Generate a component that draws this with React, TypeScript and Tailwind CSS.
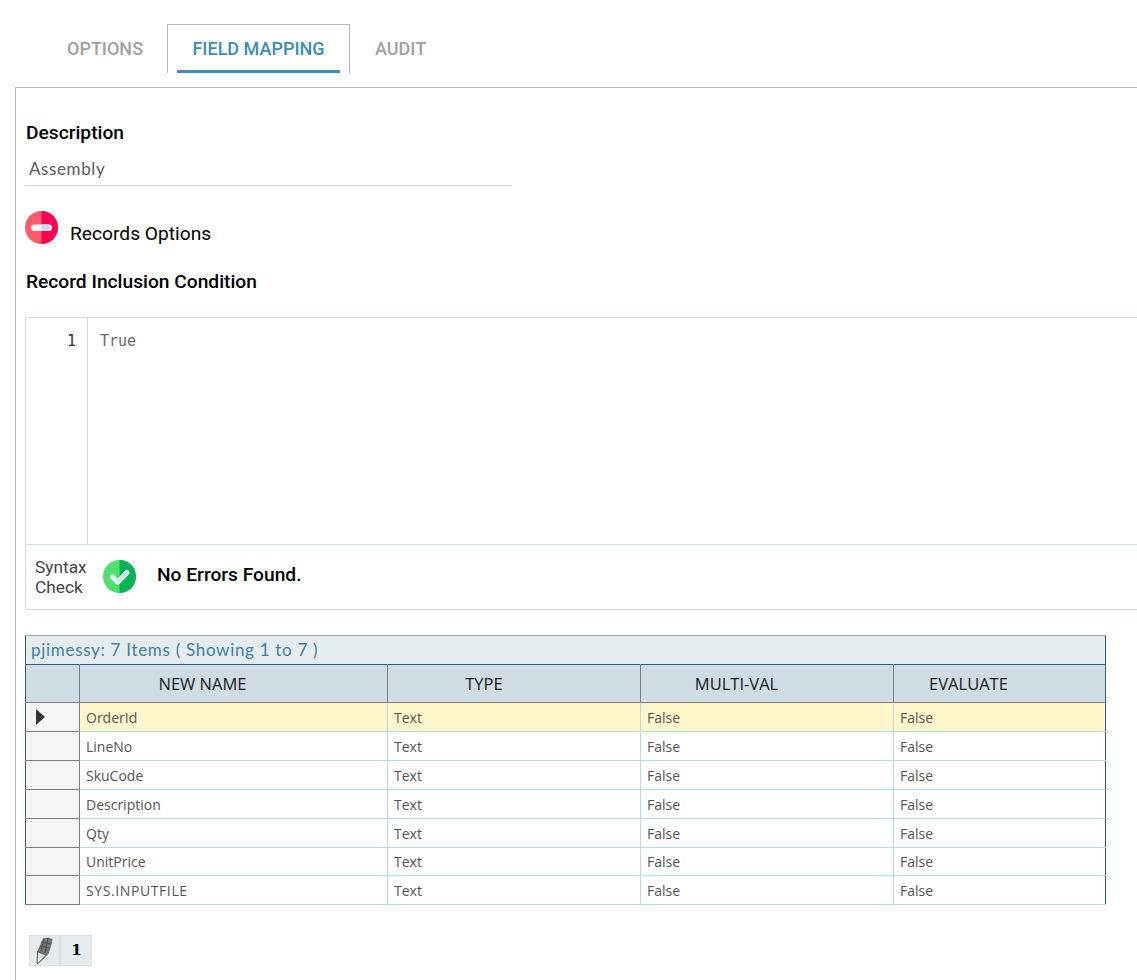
import React from "react";

const rows = ["OrderId", "LineNo", "SkuCode", "Description", "Qty", "UnitPrice", "SYS.INPUTFILE"];

function MinusIcon() {
  return (
    <svg width="33" height="33" viewBox="0 0 33 33" className="shrink-0">
      <circle cx="16.5" cy="16.5" r="16.5" fill="#ff5a6a" />
      <path d="M16.5 0a16.5 16.5 0 0 1 0 33z" fill="#fd0054" />
      <rect x="6" y="13.5" width="21" height="6.5" rx="3.2" fill="#f0f4f6" />
      <path d="M16.5 13.5H23.8a3.2 3.2 0 0 1 0 6.5h-7.3z" fill="#cfdfe6" />
    </svg>
  );
}

function CheckIcon() {
  return (
    <svg width="33" height="33" viewBox="0 0 33 33" className="shrink-0 mb-[2px]">
      <circle cx="16.5" cy="16.5" r="16.5" fill="#4fe070" />
      <path d="M16.5 0a16.5 16.5 0 0 1 0 33z" fill="#09b354" />
      <path d="M9.5 17l5.2 5.2L24 12.5" fill="none" stroke="#e3eff1" strokeWidth="5" strokeLinecap="round" strokeLinejoin="round" />
      <path d="M16.5 20.4L24 12.5" fill="none" stroke="#d5e6ea" strokeWidth="5" strokeLinecap="round" />
    </svg>
  );
}

function PencilIcon() {
  return (
    <svg width="18" height="27" viewBox="0 0 18 27">
      <path d="M7 1.5L12 .5 16.5 2 16 6 12.5 17 3 26 1 26.5 1.5 14z" fill="#757575" />
      <path d="M1.6 14.5l8.5 3.8L3 25.5l-2 1z" fill="#e2e2e2" stroke="#555" strokeWidth="1" />
      <path d="M5 5l10 2M4 9l9.5 2M8 2L5 14M12 1L9 16" stroke="#454545" strokeWidth="0.8" fill="none" />
    </svg>
  );
}

export default function App() {
  return (
    <div className="w-[1137px] h-[980px] overflow-hidden bg-white pt-[24px] font-['Roboto',sans-serif]">
      {/* tabs */}
      <div className="flex flex-row pl-[42px] h-[49px] text-[18px] font-medium">
        <div className="w-[125px] pl-[25px] pt-[11px] text-[#a0a0a0]">OPTIONS</div>
        <div className="w-[183px] h-[49px] border border-b-0 border-[#b5b5b5] px-[9px]">
          <div className="h-full pt-[10px] text-center text-[#3f8cb5] border-b-[3px] border-[#3f8cb5]">FIELD MAPPING</div>
        </div>
        <div className="pl-[25px] pt-[11px] text-[#a0a0a0]">AUDIT</div>
      </div>

      {/* panel */}
      <div className="mt-[14px] ml-[15px] h-[893px] border-l border-t border-[#b5b5b5] pl-[9px] pt-[33px]">
        <div className="pl-px text-[19.2px] leading-[24px] font-medium text-black">Description</div>
        <div className="mt-[11px] w-[487px] h-[30px] border-b border-[#d2d2cc] pl-[4px] text-[17px] leading-[25px] tracking-[0.6px] text-[#5b5b5b] font-['Lato',sans-serif]">
          Assembly
        </div>

        <div className="mt-[25px] flex flex-row">
          <MinusIcon />
          <span className="ml-[12px] mt-[11px] text-[19.2px] leading-[24px] text-black">Records Options</span>
        </div>
        <div className="mt-[24px] pl-px text-[19.2px] leading-[24px] font-medium text-black">Record Inclusion Condition</div>

        {/* editor */}
        <div className="mt-[23px] border border-r-0 border-[#d1dbe2] h-[293px]">
          <div className="flex flex-row h-[227px] border-b border-[#d1dbe2]">
            <div className="w-[62px] border-r border-[#d1dbe2] pt-[14px] pr-[11px] text-right text-[15px] leading-[19px] text-[#333] font-['DejaVu_Sans_Mono',monospace]">1</div>
            <div className="pl-[12px] pt-[14px] text-[15px] leading-[19px] text-[#6a6a6a] font-['DejaVu_Sans_Mono',monospace]">True</div>
          </div>
          <div className="flex flex-row items-center h-[64px]">
            <div className="w-[77px] pl-[9px] text-[17.3px] leading-[20px] text-[#444]">Syntax<br />Check</div>
            <CheckIcon />
            <span className="ml-[21px] pb-[3px] text-[19.2px] font-medium text-black">No Errors Found.</span>
          </div>
        </div>

        {/* grid */}
        <div className="mt-[25px] w-[1081px] font-['Open_Sans',sans-serif]">
          <div className="h-[29px] border-t border-x border-t-[#93a8b5] border-x-[#2f5f7f] bg-[#e4ecf0] pl-[5px] text-[17px] leading-[28px] text-[#3f7fa0] font-['Lato',sans-serif] tracking-[0.7px]">
            pjimessy: 7 Items ( Showing 1 to 7 )
          </div>
          <table className="w-[1080px] table-fixed border-collapse">
            <colgroup>
              <col className="w-[54px]" />
              <col className="w-[308px]" />
              <col className="w-[253px]" />
              <col className="w-[253px]" />
              <col className="w-[212px]" />
            </colgroup>
            <thead>
              <tr className="h-[38px] bg-[#cfdce4] text-[16.5px] text-[#1a1a1a]">
                <th className="border border-[#7f7f7f] border-t-[#2f5f7f] border-l-[#2f5f7f] font-normal"></th>
                <th className="border border-[#7f7f7f] border-t-[#2f5f7f] font-normal pt-[2px] pr-[62px]">NEW NAME</th>
                <th className="border border-[#7f7f7f] border-t-[#2f5f7f] font-normal pt-[2px] pr-[60px]">TYPE</th>
                <th className="border border-[#7f7f7f] border-t-[#2f5f7f] font-normal pt-[2px] pr-[61px]">MULTI-VAL</th>
                <th className="border border-[#7f7f7f] border-t-[#2f5f7f] border-r-[#2f5f7f] font-normal pt-[2px] pr-[62px]">EVALUATE</th>
              </tr>
            </thead>
            <tbody>
              {rows.map((name, i) => (
                <tr key={name} className={i === 0 ? "h-[29px] bg-[#fff7c9] text-[14px] text-[#555]" : i === 5 ? "h-[28px] text-[14px] text-[#555]" : "h-[29px] text-[14px] text-[#555]"}>
                  <td className="border border-[#7f7f7f] border-l-[#2f5f7f] bg-[#f5f5f5] p-0">
                    {i === 0 && <div className="ml-[10px] w-0 h-0 border-y-[8px] border-y-transparent border-l-[9px] border-l-[#333]" />}
                  </td>
                  <td className={i === 6 ? "border border-[#b5d9ea] pl-[6px] tracking-[0.6px]" : "border border-[#b5d9ea] pl-[6px]"}>{name}</td>
                  <td className="border border-[#b5d9ea] pl-[6px]">Text</td>
                  <td className="border border-[#b5d9ea] pl-[6px]">False</td>
                  <td className="border border-[#b5d9ea] border-r-[#2f5f7f] pl-[6px]">False</td>
                </tr>
              ))}
            </tbody>
          </table>
        </div>

        {/* pager */}
        <div className="mt-[30px] ml-[4px] flex flex-row gap-0">
          <div className="w-[31px] h-[31px] border border-[#dcdfe1] bg-[#e4ecf0] flex items-center justify-center"><PencilIcon /></div>
          <div className="w-[32px] h-[31px] border border-[#dcdfe1] bg-[#e4ecf0] flex items-center justify-center pl-[1px] text-[15px] font-bold text-black font-['DejaVu_Serif',serif]">1</div>
        </div>
      </div>
    </div>
  );
}
